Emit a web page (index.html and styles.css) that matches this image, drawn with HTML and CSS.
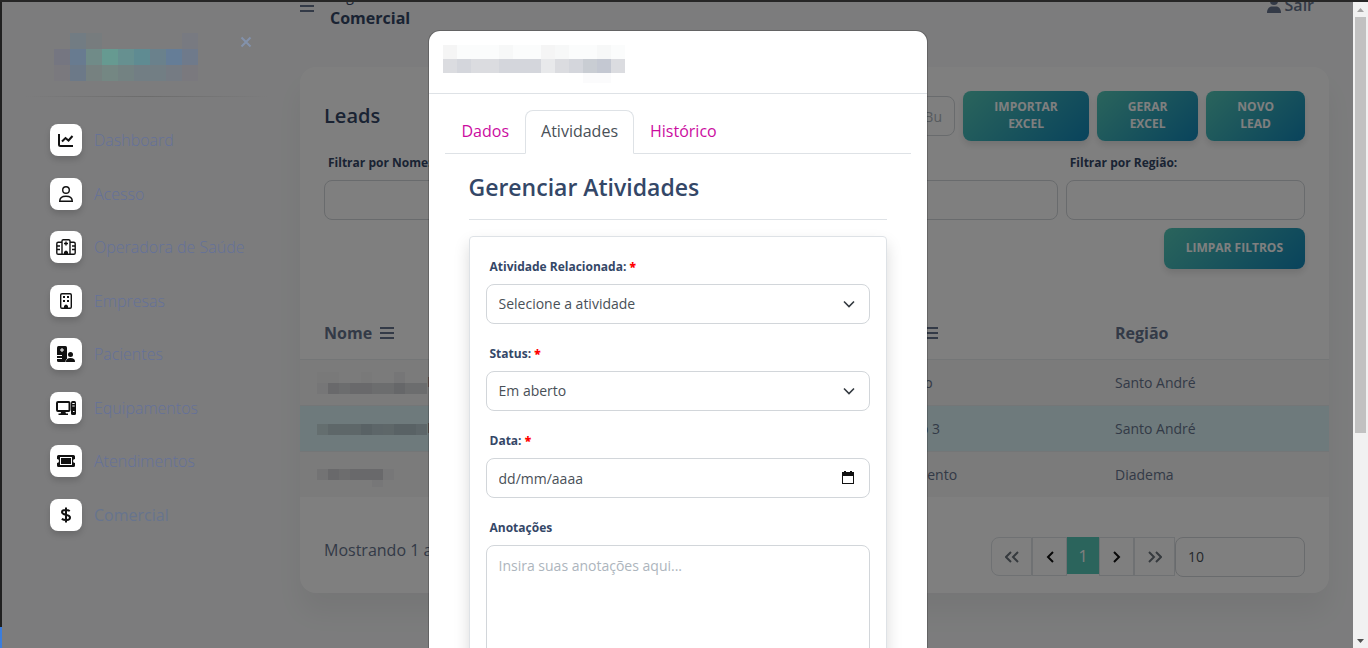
FILE: index.html
```html
<!DOCTYPE html>
<html lang="pt-BR">
<head>
<meta charset="utf-8">
<meta name="viewport" content="width=device-width, initial-scale=1">
<title>Comercial</title>
<link rel="stylesheet" href="styles.css">
</head>
<body>
<div class="edge"><span class="edge-accent"></span></div>
<div class="viewport">
  <div class="app">
    <aside class="sidebar">
      <div class="brand">
        <svg class="brand-logo" width="144" height="48" viewBox="0 0 144 48" shape-rendering="crispEdges" aria-hidden="true">
          <rect x="16" width="16" height="16" fill="#727c83"/><rect x="32" width="16" height="16" fill="#777c7e"/><rect x="128" width="16" height="16" fill="#787a81"/>
          <rect y="16" width="16" height="16" fill="#757681"/><rect x="16" y="16" width="16" height="16" fill="#687b90"/><rect x="32" y="16" width="16" height="16" fill="#708b88"/><rect x="48" y="16" width="16" height="16" fill="#669a91"/><rect x="64" y="16" width="16" height="16" fill="#669090"/><rect x="80" y="16" width="16" height="16" fill="#5f8b92"/><rect x="96" y="16" width="16" height="16" fill="#6a818c"/><rect x="112" y="16" width="16" height="16" fill="#657d97"/><rect x="128" y="16" width="16" height="16" fill="#6f7a8b"/>
          <rect y="32" width="16" height="16" fill="#7a797e"/><rect x="16" y="32" width="16" height="16" fill="#6c7988"/><rect x="32" y="32" width="16" height="16" fill="#768180"/><rect x="48" y="32" width="16" height="16" fill="#748783"/><rect x="64" y="32" width="16" height="16" fill="#738282"/><rect x="80" y="32" width="32" height="16" fill="#727e84"/><rect x="112" y="32" width="16" height="16" fill="#757b83"/><rect x="128" y="32" width="16" height="16" fill="#7a797e"/>
        </svg>
        <button class="close" aria-label="Fechar menu"><svg width="12" height="12" viewBox="0 0 12 12"><path d="M1.500 1.500l9 9M10.500 1.500l-9 9"/></svg></button>
      </div>
      <nav>
        <ul class="nav">
          <li><a href="#"><span class="tile"><svg viewBox="0 0 32 32"><path class="line" d="M9 10v10.500q0 1.500 1.500 1.500H23M12 17.500l3.500-3.500 3 2.500 4-4.500"/></svg></span>Dashboard</a></li>
          <li><a href="#"><span class="tile"><svg viewBox="0 0 32 32"><circle class="thin" cx="16" cy="12" r="3.300"/><path class="thin" d="M9.700 23.300c0-3.500 2.500-5 6.300-5s6.300 1.500 6.300 5z"/></svg></span>Acesso</a></li>
          <li><a href="#"><span class="tile"><svg viewBox="0 0 32 32"><path class="thin" d="M12 23.300V10q0-1.300 1.300-1.300h5.400Q20 8.700 20 10v13.300M12 11.300H8.200q-1.400 0-1.400 1.400v9.200q0 1.400 1.400 1.400h15.600q1.400 0 1.400-1.400v-9.200q0-1.400-1.400-1.400H20M7 15h3M7 18.500h3M22 15h3M22 18.500h3M16 10.500v4M14 12.500h4"/><path d="M14 24v-3q2-3 4 0v3z"/></svg></span>Operadora de Saúde</a></li>
          <li><a href="#"><span class="tile"><svg viewBox="0 0 32 32"><rect class="thin" x="10.700" y="8.700" width="10.600" height="14.600" rx="1.300"/><path d="M13 11h2v2h-2zM17 11h2v2h-2zM13 15h2v2h-2zM17 15h2v2h-2zM14 24v-3q2-3 4 0v3z"/></svg></span>Empresas</a></li>
          <li><a href="#"><span class="tile"><svg viewBox="0 0 32 32"><rect x="7" y="8" width="10" height="16" rx="1.500"/><path class="cut" d="M12 10v4M10 12h4M7 17.500h5M7 20.500h5"/><circle cx="20.500" cy="16.500" r="2.500"/><path class="halo" d="M16 24c0-3 1.500-4 4.500-4s4.500 1 4.500 4z"/></svg></span>Pacientes</a></li>
          <li><a href="#"><span class="tile"><svg viewBox="0 0 32 32"><rect class="line" x="7" y="10" width="12.500" height="9" rx="1"/><path d="M11.500 19h3.500l1 2.500h2V23H8.500v-1.500h2z"/><rect x="21" y="9" width="5" height="14" rx="1.500"/><path class="cut" d="M22.300 11.500h2.400M22.300 14h2.400M23 19.500h1.500"/></svg></span>Equipamentos</a></li>
          <li><a href="#"><span class="tile"><svg viewBox="0 0 32 32"><path d="M8.500 10h15q1.500 0 1.500 1.500V14a2 2 0 0 0 0 4v2.500q0 1.500-1.500 1.500h-15Q7 22 7 20.500V18a2 2 0 0 0 0-4v-2.500Q7 10 8.500 10z"/><rect class="cut" x="10.500" y="12.500" width="11" height="7"/></svg></span>Atendimentos</a></li>
          <li class="active"><a href="#"><span class="tile"><svg viewBox="0 0 32 32"><path class="line" d="M16 8.500v15M19.800 12c-1.800-1.200-7.800-2-7.800 1.200 0 3.200 8 2 8 5.200 0 3.600-6 2.900-8.200 1.500"/></svg></span>Comercial</a></li>
        </ul>
      </nav>
    </aside>

    <main class="main">
      <header class="topbar">
        <button class="menu" aria-label="Menu"><svg width="14" height="14" viewBox="0 0 14 14"><path d="M0 2h14M0 7h14M0 12h14"/></svg></button>
        <div class="crumbs"><span>Páginas</span><h1>Comercial</h1></div>
        <a class="logout" href="#"><svg width="14" height="16" viewBox="0 0 14 16"><circle cx="7" cy="4" r="4"/><path d="M0 16c0-4 2-6.500 5-6.500h4c3 0 5 2.500 5 6.500z"/></svg>Sair</a>
      </header>

      <section class="card">
        <div class="card-head">
          <h2>Leads</h2>
          <input class="field search" type="text" placeholder="Bu" aria-label="Buscar">
          <button class="btn">IMPORTAR<br>EXCEL</button>
          <button class="btn">GERAR<br>EXCEL</button>
          <button class="btn">NOVO<br>LEAD</button>
        </div>
        <div class="filters">
          <div><label for="f1">Filtrar por Nome:</label><input class="field" id="f1"></div>
          <div><label for="f2">Telefone:</label><input class="field" id="f2"></div>
          <div><label for="f3">Status:</label><input class="field" id="f3"></div>
          <div><label for="f4">Filtrar por Região:</label><input class="field" id="f4"></div>
        </div>
        <div class="clear"><button class="btn">LIMPAR FILTROS</button></div>
        <table class="leads">
          <thead><tr>
            <th class="c-name">Nome <svg width="14" height="12" viewBox="0 0 14 12"><path d="M0 1h14M0 6h14M0 11h14"/></svg></th>
            <th class="c-status">Status <svg width="14" height="12" viewBox="0 0 14 12"><path d="M0 1h14M0 6h14M0 11h14"/></svg></th>
            <th>Região</th>
          </tr></thead>
          <tbody>
            <tr>
              <td class="masked"><svg width="110" height="22" viewBox="0 0 110 22" shape-rendering="crispEdges" aria-hidden="true"><path fill="#f2f2f3" d="M0 0h22v11H0zM44 0h11v11H44z"/><path fill="#ececee" d="M77 0h11v11H77zM0 11h11v11H0z"/><path fill="#d2d3d6" d="M11 11h11v11H11zM33 11h22v11H33z"/><path fill="#d9dadc" d="M22 11h11v11H22zM55 11h22v11H55zM88 11h22v11H88z"/><path fill="#cdced2" d="M77 11h11v11H77z"/></svg>F</td>
              <td>Em aberto</td><td>Santo André</td>
            </tr>
            <tr class="selected">
              <td class="masked"><svg width="110" height="22" viewBox="0 0 110 22" shape-rendering="crispEdges" aria-hidden="true"><path fill="#c8dcde" d="M0 6h11v11H0z"/><path fill="#bccfd2" d="M11 6h33v11H11zM66 6h11v11H66z"/><path fill="#b2c4ca" d="M44 6h11v11H44zM77 6h22v11H77z"/><path fill="#bbcdd3" d="M55 6h11v11H55zM99 6h11v11H99z"/></svg>F</td>
              <td>Aprovado 3</td><td>Santo André</td>
            </tr>
            <tr>
              <td class="masked"><svg width="110" height="22" viewBox="0 0 110 22" shape-rendering="crispEdges" aria-hidden="true"><path fill="#e6e6e8" d="M0 4h11v11H0z"/><path fill="#d2d3d6" d="M11 4h11v11H11zM33 4h33v11H33z"/><path fill="#dadbdd" d="M22 4h11v11H22z"/><path fill="#efeff0" d="M66 4h11v11H66zM55 15h11v7H55z"/></svg></td>
              <td>Agendamento</td><td>Diadema</td>
            </tr>
          </tbody>
        </table>
        <div class="pager">
          <span>Mostrando 1 a 3</span>
          <div class="pages">
            <button class="page wide first" aria-label="Primeira"><svg width="14" height="12" viewBox="0 0 14 12"><path d="M6 1L1 6l5 5M13 1L8 6l5 5"/></svg></button>
            <button class="page step" aria-label="Anterior"><svg width="10" height="12" viewBox="0 0 10 12"><path d="M8 1L3 6l5 5"/></svg></button>
            <button class="page current">1</button>
            <button class="page step" aria-label="Próxima"><svg width="10" height="12" viewBox="0 0 10 12"><path d="M2 1l5 5-5 5"/></svg></button>
            <button class="page wide" aria-label="Última"><svg width="14" height="12" viewBox="0 0 14 12"><path d="M1 1l5 5-5 5M8 1l5 5-5 5"/></svg></button>
            <select class="field size" aria-label="Itens por página"><option>10</option></select>
          </div>
        </div>
      </section>
    </main>
  </div>

  <div class="backdrop"></div>

  <div class="modal-layer">
    <div class="modal" role="dialog" aria-label="Gerenciar Atividades">
      <div class="modal-head">
        <svg width="182" height="38" viewBox="0 0 182 38" shape-rendering="crispEdges" aria-hidden="true">
          <path fill="#f5f5f5" d="M0 0h14v14H0zM98 0h14v14H98z"/><path fill="#fbfcfc" d="M14 0h42v14H14zM70 0h28v14H70zM126 0h28v14h-28zM168 0h14v14h-14z"/><path fill="#f7f8f8" d="M56 0h14v14H56zM112 0h14v14h-14zM154 0h14v14h-14z"/>
          <path fill="#dbdce0" d="M0 14h14v14H0zM28 14h28v14H28zM112 14h14v14h-14zM168 14h14v14h-14z"/><path fill="#d4d6dc" d="M14 14h14v14H14zM56 14h42v14H56zM126 14h14v14h-14z"/><path fill="#e8e9eb" d="M98 14h14v14H98z"/><path fill="#c9cdd3" d="M140 14h14v14h-14z"/><path fill="#c4c8d2" d="M154 14h14v14h-14z"/><path fill="#fbfbfc" d="M140 28h28v10h-28z"/>
        </svg>
      </div>
      <div class="modal-body">
        <div class="tabs" role="tablist">
          <button role="tab">Dados</button>
          <button role="tab" aria-selected="true">Atividades</button>
          <button role="tab">Histórico</button>
        </div>
        <div class="pane">
          <h3>Gerenciar Atividades</h3>
          <form class="form">
            <label for="atividade">Atividade Relacionada: <b>*</b></label>
            <div class="control">
              <select class="field" id="atividade"><option>Selecione a atividade</option></select>
              <svg width="12" height="8" viewBox="0 0 12 8"><path d="M1 1.500l5 5 5-5"/></svg>
            </div>
            <label for="status">Status: <b>*</b></label>
            <div class="control">
              <select class="field" id="status"><option>Em aberto</option></select>
              <svg width="12" height="8" viewBox="0 0 12 8"><path d="M1 1.500l5 5 5-5"/></svg>
            </div>
            <label for="data">Data: <b>*</b></label>
            <div class="control">
              <input class="field date" id="data" placeholder="dd/mm/aaaa">
              <svg class="calendar" width="14" height="14" viewBox="0 0 14 14"><path d="M3 0h2v1h4V0h2v1h2v12H1V1h2zM2 5v7h10V5z" fill-rule="evenodd"/></svg>
            </div>
            <label for="notas">Anotações</label>
            <textarea class="field" id="notas" rows="8" placeholder="Insira suas anotações aqui..."></textarea>
          </form>
        </div>
      </div>
    </div>
  </div>
</div>
<div class="scrollbar" aria-hidden="true">
  <svg width="15" height="15" viewBox="0 0 15 15"><path fill="#a3a3a3" d="M4 10l3.500-4L11 10z"/></svg>
  <span class="thumb"></span>
  <svg width="15" height="15" viewBox="0 0 15 15"><path fill="#505050" d="M4 6l3.500 4L11 6z"/></svg>
</div>
</body>
</html>
```
FILE: styles.css
```css
* { box-sizing: border-box; }

body {
  margin: 0;
  height: 100vh;
  overflow: hidden;
  display: grid;
  grid-template-columns: 2px 1fr 15px;
  border-top: 2px solid #262626;
  font-family: "Open Sans", "Noto Sans", sans-serif;
  font-size: 16px;
  line-height: 26px;
  color: #67748e;
}

h1, h2, h3, ul { margin: 0; padding: 0; }
button, input, select, textarea { font: inherit; }
button { border: 0; background: none; padding: 0; }
a { color: inherit; text-decoration: none; }
svg { display: block; }

.edge { background: #202020; display: flex; align-items: flex-end; }
.edge-accent { width: 2px; height: 21px; background: #3b7ddd; }

.viewport { position: relative; overflow: hidden; background: #f8f9fa; }
.app { display: flex; height: 100%; }

/* Sidebar */
.sidebar {
  position: relative;
  z-index: 3;
  flex: 0 0 274px;
  padding: 31px 8px 0 24px;
}
.brand {
  display: flex;
  justify-content: space-between;
  align-items: flex-start;
  height: 63px;
  padding: 0 16px 0 28px;
}
.close svg { margin-top: 3px; fill: none; stroke: #8392ab; stroke-width: 2; }
.sidebar nav {
  padding-top: 27px;
  border-top: 1px solid;
  border-image: linear-gradient(90deg, transparent, #6c6c6c, transparent) 1;
}
.nav {
  list-style: none;
  height: 407px;
  display: flex;
  flex-direction: column;
  justify-content: space-between;
}
.nav a {
  display: flex;
  align-items: center;
  gap: 12px;
  padding-left: 24px;
  height: 32px;
  line-height: 24px;
  font-weight: 300;
  color: #64719a;
}
.nav .active a { font-weight: 400; color: #67748e; }
.tile {
  width: 32px;
  height: 32px;
  border-radius: 8px;
  background: #fff;
  box-shadow: 0 4px 6px rgba(0, 0, 0, .14);
}
.tile svg { fill: #111; }
.tile .line { fill: none; stroke: #111; stroke-width: 2; }
.tile .thin { fill: none; stroke: #111; stroke-width: 1.4; }
.tile .cut { fill: none; stroke: #fff; stroke-width: 1; }
.tile .halo { stroke: #fff; stroke-width: 1; paint-order: stroke; }

/* Main area */
.main { flex: 1; min-width: 0; padding: 0 24px; }
.topbar {
  display: flex;
  align-items: flex-start;
  height: 65px;
}
.menu { margin-top: -3px; }
.menu svg { stroke: #67748e; stroke-width: 2; }
.crumbs { margin: -17px 0 0 16px; font-size: 14px; line-height: 21px; color: #344767; }
.crumbs h1 { font-size: 16px; line-height: 24px; font-weight: 700; }
.logout {
  display: flex;
  align-items: center;
  gap: 4px;
  margin: -10px 15px 0 auto;
  font-weight: 600;
  color: #67748e;
}
.logout svg { fill: #67748e; }

.card {
  padding: 24px 0 16px;
  border-radius: 16px;
  background: #fff;
  box-shadow: 0 20px 27px rgba(0, 0, 0, .05);
}
.card-head { display: flex; align-items: center; gap: 8px; padding: 0 24px; }
.card-head h2 { margin-right: auto; font-size: 20px; font-weight: 600; color: #344767; }

.field {
  display: block;
  width: 100%;
  height: 40px;
  padding: 0 12px;
  border: 1px solid #d2d6da;
  border-radius: 8px;
  background: #fff;
  appearance: none;
  font-size: 14px;
  line-height: 20px;
  color: #495057;
}
.field::placeholder { color: #adb5bd; opacity: 1; }
.search { width: 44px; }

.btn {
  padding: 7px 31px 9px;
  border-radius: 8px;
  background: linear-gradient(135deg, #55c9b9, #1287b9);
  box-shadow: 0 4px 7px rgba(0, 0, 0, .11);
  font-size: 12px;
  line-height: 17px;
  font-weight: 700;
  color: #fff;
}
.filters {
  display: grid;
  grid-template-columns: repeat(4, 1fr);
  gap: 8px;
  padding: 8px 24px;
}
label {
  display: block;
  padding: 0 4px;
  font-size: 12px;
  line-height: 27px;
  font-weight: 700;
  color: #344767;
}
.filters label { margin-bottom: 4px; }
.clear { display: flex; justify-content: flex-end; padding: 0 24px; }
.clear .btn { padding: 11px 22px 13px; }

.leads {
  width: 100%;
  margin-top: 37px;
  border-collapse: collapse;
  table-layout: fixed;
  text-align: left;
}
.leads th { height: 53px; padding: 2px 0 0 24px; font-weight: 700; }
.leads th svg { display: inline-block; margin-left: 4px; stroke: #67748e; stroke-width: 2; }
.leads td { height: 46px; padding: 2px 0 0 24px; font-size: 14px; }
.leads tbody tr { background: #f6f6f6; border-top: 1px solid #e9ecef; }
.leads tbody .selected { background: #dcf4f8; }
.c-name { width: 541px; }
.c-status { width: 250px; }
.leads .masked { padding: 0 0 0 17px; }
.masked svg { display: inline-block; vertical-align: middle; }

.pager {
  display: flex;
  justify-content: space-between;
  align-items: flex-start;
  padding: 40px 24px 0;
}
.pages { display: flex; align-items: flex-start; }
.page {
  display: grid;
  place-items: center;
  width: 35px;
  height: 39px;
  border: 1px solid #dee2e6;
}
.page svg { fill: none; stroke: #6c757d; stroke-width: 2; }
.wide { width: 41px; }
.first { border-radius: 8px 0 0 8px; }
.page.step svg { stroke: #111; }
.current { width: 32px; height: 37px; border: 0; background: #57c8b8; color: #fff; }
.size { width: 130px; }

/* Overlay */
.backdrop { position: absolute; inset: 0; z-index: 2; background: rgba(0, 0, 0, .5); }
.modal-layer {
  position: absolute;
  inset: 0;
  z-index: 4;
  display: flex;
  justify-content: center;
  align-items: flex-start;
  padding-top: 28px;
  pointer-events: none;
}
.modal {
  width: 500px;
  border: 1px solid rgba(0, 0, 0, .2);
  border-radius: 12px;
  background: #fff;
  background-clip: padding-box;
  pointer-events: auto;
}
.modal-head { height: 63px; padding: 14px; border-bottom: 1px solid #dee2e6; }
.modal-body { padding: 16px; }

.tabs { display: flex; border-bottom: 1px solid #dee2e6; }
.tabs button {
  margin-bottom: -1px;
  padding: 7px 15px 9px;
  border: 1px solid transparent;
  border-radius: 8px 8px 0 0;
  color: #cb0c9f;
}
.tabs button:first-child { padding-left: 16px; }
.tabs [aria-selected="true"] { border-color: #dee2e6 #dee2e6 #fff; background: #fff; color: #495057; }

.pane { padding: 16px 24px; }
.pane h3 {
  margin-bottom: 16px;
  padding-bottom: 14px;
  border-bottom: 1px solid #dee2e6;
  font-size: 23px;
  line-height: 35px;
  font-weight: 600;
  color: #344767;
}
.form {
  padding: 16px;
  border: 1px solid #dee2e6;
  border-radius: 4px;
  box-shadow: 0 8px 16px rgba(0, 0, 0, .15);
}
.form label { line-height: 28px; margin-bottom: 3px; }
.form b { color: #f00; }
.form textarea { height: auto; padding: 10px 12px; resize: none; }
.date::placeholder { color: #495057; }
.control { display: grid; align-items: center; margin-bottom: 16px; }
.control > * { grid-area: 1 / 1; }
.control svg {
  justify-self: end;
  margin-right: 15px;
  fill: none;
  stroke: #343a40;
  stroke-width: 1.6;
  pointer-events: none;
}
.control .calendar { fill: #111; stroke: none; }

.scrollbar {
  display: flex;
  flex-direction: column;
  justify-content: space-between;
  background: #f1f1f1;
}
.thumb { width: 11px; height: 416px; margin: 0 2px auto; background: #c1c1c1; }
```
